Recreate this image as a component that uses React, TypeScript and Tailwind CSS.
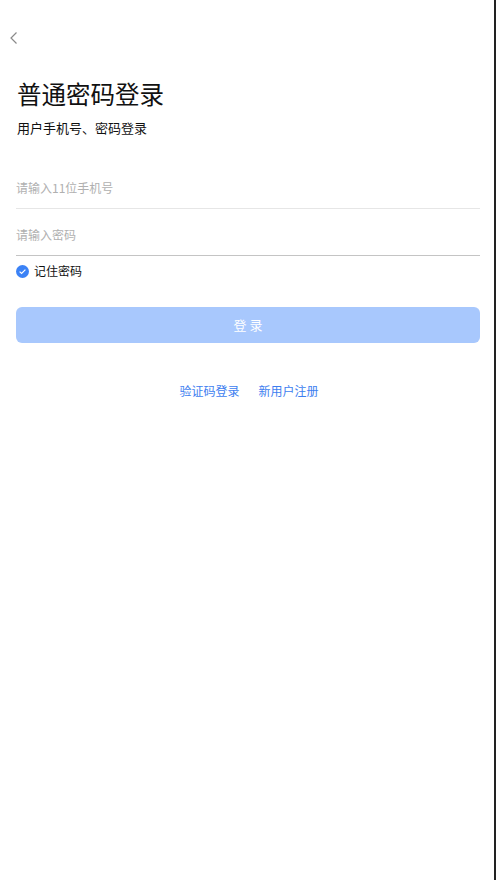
import { useState } from "react";

const FONT = {
  fontFamily: '"Noto Sans CJK SC", "Noto Sans", sans-serif',
};

export default function App() {
  const [phone, setPhone] = useState("");
  const [password, setPassword] = useState("");
  const [remember, setRemember] = useState(true);

  const canSubmit = phone.length > 0 && password.length > 0;

  return (
    <div
      className="min-h-[880px] w-[496px] bg-white border-r-2 border-[#222] flex flex-col"
      style={FONT}
    >
      {/* Back */}
      <div className="h-[76px] pl-[9px] pt-[30px]">
        <button type="button" className="w-[14px] h-[16px] flex items-center">
          <svg width="10" height="14" viewBox="0 0 10 14" fill="none">
            <path d="M7.5 1.5 2 7l5.5 5.5" stroke="#8a8a8a" strokeWidth="1.2" />
          </svg>
        </button>
      </div>

      <div className="pl-4 pr-[14px] flex flex-col">
        <h1 className="text-[24.5px] leading-[36px] text-[#111] pl-px">普通密码登录</h1>
        <p className="text-[13px] leading-[18px] text-[#111] mt-[7px] pl-px">用户手机号、密码登录</p>

        {/* Phone */}
        <div className="mt-[25px] border-b border-[#e6e6e6] h-[47px] flex items-center">
          <input
            className="w-full outline-none text-[12px] text-[#111] placeholder:text-[#b0b0b0] pt-[5px]"
            placeholder="请输入11位手机号"
            value={phone}
            onChange={(e) => setPhone(e.target.value)}
          />
        </div>

        {/* Password */}
        <div className="border-b border-[#c4c4c4] h-[47px] flex items-center">
          <input
            type="password"
            className="w-full outline-none text-[12px] text-[#111] placeholder:text-[#b0b0b0] pt-[5px]"
            placeholder="请输入密码"
            value={password}
            onChange={(e) => setPassword(e.target.value)}
          />
        </div>

        {/* Remember */}
        <label className="mt-[7px] flex items-center gap-[5px] cursor-pointer select-none">
          <span
            className="w-[13px] h-[13px] rounded-full bg-[#3b82f6] flex items-center justify-center"
            onClick={() => setRemember(!remember)}
          >
            {remember && (
              <svg width="9" height="9" viewBox="0 0 9 9" fill="none">
                <path d="M1.6 4.6 3.6 6.5 7.4 2.6" stroke="white" strokeWidth="1.2" />
              </svg>
            )}
          </span>
          <span className="text-[12px] leading-[16px] text-[#111]">记住密码</span>
        </label>

        {/* Submit */}
        <button
          type="button"
          disabled={!canSubmit}
          className={
            canSubmit
              ? "mt-[28px] h-[36px] w-full rounded-[6px] bg-[#3b82f6] text-white text-[13px]"
              : "mt-[28px] h-[36px] w-full rounded-[6px] bg-[#a8c8fd] text-white text-[13px]"
          }
        >
          登 录
        </button>

        {/* Links */}
        <div className="mt-[40px] flex justify-center gap-[19px] text-[12px] leading-[16px] text-[#3d7ef0] pl-[2px]">
          <a href="#">验证码登录</a>
          <a href="#">新用户注册</a>
        </div>
      </div>
    </div>
  );
}
